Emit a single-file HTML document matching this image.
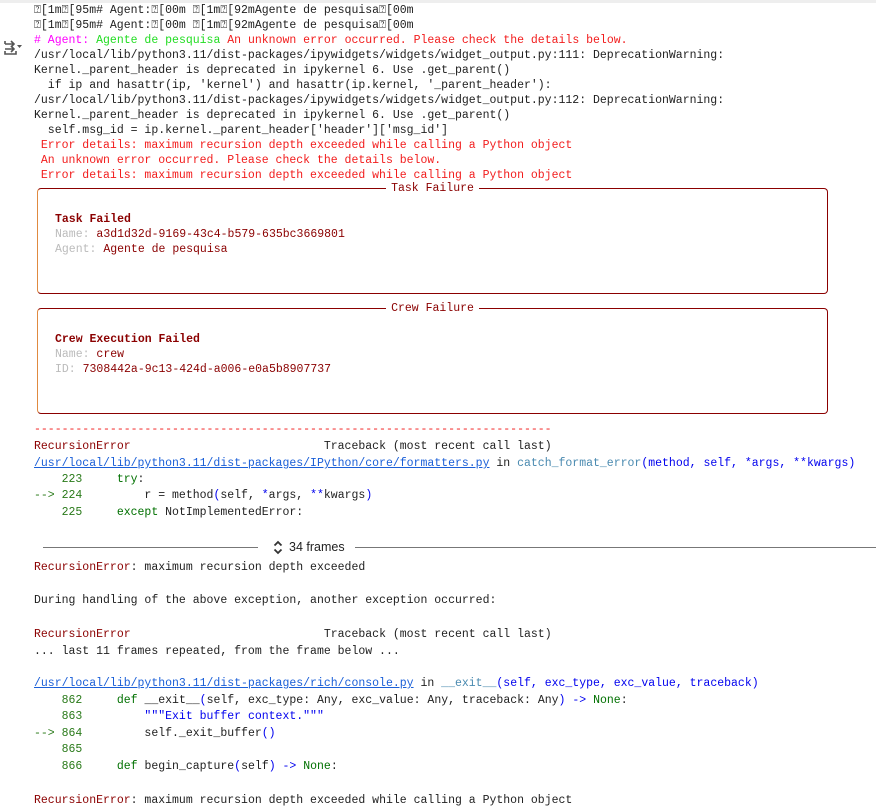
<!DOCTYPE html>
<html><head><meta charset="utf-8"><style>
body{margin:0;width:876px;height:805px;background:#fff;overflow:hidden;position:relative;font-family:"Liberation Mono",monospace;font-size:11.5px;color:#212121}
.l{position:absolute;left:34px;white-space:pre;line-height:15px;height:15px;margin-top:1px}
.r{color:#f21c1c}.m{color:#f0f}.g{color:#22dd22}.dr{color:#8b0000}.gr{color:#bbb}
.n{color:#2a7a1a}.k{color:#007000}.b{color:#0000ee}.lk{color:#1a5fd8;text-decoration:underline}.fn{color:#4a8ab0}
.box{position:absolute;left:37px;width:789px;border:1px solid #8b0000;border-left-color:#e08a40;border-radius:4px}
.lab{position:absolute;top:-8px;left:0;right:0;text-align:center;line-height:15px}
.lab span{background:#fff;color:#8b0000;padding:0 5px}
</style></head><body>
<div style="position:absolute;top:0;left:0;width:876px;height:3px;background:#eee"></div>
<svg style="position:absolute;left:3px;top:39px" width="20" height="17" viewBox="0 0 20 17"><path d="M2 2v3M2 12v3h11v-3M2 5h9M8 2l3 3-3 3M2 10h9M8 7l3 3-3 3" stroke="#555" stroke-width="1.6" fill="none"/><path d="M14 6h5l-2.5 3z" fill="#555"/></svg>
<div class="l" style="top:2px">⍰[1m⍰[95m# Agent:⍰[00m ⍰[1m⍰[92mAgente de pesquisa⍰[00m</div>
<div class="l" style="top:17px">⍰[1m⍰[95m# Agent:⍰[00m ⍰[1m⍰[92mAgente de pesquisa⍰[00m</div>
<div class="l" style="top:32px"><span class="m"># Agent: </span><span class="g">Agente de pesquisa</span><span class="r"> An unknown error occurred. Please check the details below.</span></div>
<div class="l" style="top:47px">/usr/local/lib/python3.11/dist-packages/ipywidgets/widgets/widget_output.py:111: DeprecationWarning:</div>
<div class="l" style="top:62px">Kernel._parent_header is deprecated in ipykernel 6. Use .get_parent()</div>
<div class="l" style="top:77px">  if ip and hasattr(ip, 'kernel') and hasattr(ip.kernel, '_parent_header'):</div>
<div class="l" style="top:92px">/usr/local/lib/python3.11/dist-packages/ipywidgets/widgets/widget_output.py:112: DeprecationWarning:</div>
<div class="l" style="top:107px">Kernel._parent_header is deprecated in ipykernel 6. Use .get_parent()</div>
<div class="l" style="top:122px">  self.msg_id = ip.kernel._parent_header['header']['msg_id']</div>
<div class="l r" style="top:137px"> Error details: maximum recursion depth exceeded while calling a Python object</div>
<div class="l r" style="top:152px"> An unknown error occurred. Please check the details below.</div>
<div class="l r" style="top:167px"> Error details: maximum recursion depth exceeded while calling a Python object</div>

<div class="box" style="top:188px;height:104px"><div class="lab"><span>Task Failure</span></div></div>
<div class="l dr" style="top:211px;left:55px;font-weight:bold">Task Failed</div>
<div class="l" style="top:226px;left:55px"><span class="gr">Name: </span><span class="dr">a3d1d32d-9169-43c4-b579-635bc3669801</span></div>
<div class="l" style="top:241px;left:55px"><span class="gr">Agent: </span><span class="dr">Agente de pesquisa</span></div>

<div class="box" style="top:308px;height:104px"><div class="lab"><span>Crew Failure</span></div></div>
<div class="l dr" style="top:331px;left:55px;font-weight:bold">Crew Execution Failed</div>
<div class="l" style="top:346px;left:55px"><span class="gr">Name: </span><span class="dr">crew</span></div>
<div class="l" style="top:361px;left:55px"><span class="gr">ID: </span><span class="dr">7308442a-9c13-424d-a006-e0a5b8907737</span></div>

<div class="l r" style="top:421px">---------------------------------------------------------------------------</div>
<div class="l" style="top:438px"><span class="dr">RecursionError</span>                            Traceback (most recent call last)</div>
<div class="l" style="top:455px"><span class="lk">/usr/local/lib/python3.11/dist-packages/IPython/core/formatters.py</span> in <span class="fn">catch_format_error</span><span class="b">(method, self, *args, **kwargs)</span></div>
<div class="l" style="top:471px"><span class="n">    223     </span><span class="k">try</span>:</div>
<div class="l" style="top:487px"><span class="n">--&gt; 224         </span>r = method<span class="b">(</span>self, <span class="b">*</span>args, <span class="b">**</span>kwargs<span class="b">)</span></div>
<div class="l" style="top:504px"><span class="n">    225     </span><span class="k">except</span> NotImplementedError:</div>

<div style="position:absolute;left:43px;top:547px;width:215px;height:1px;background:#777"></div>
<div style="position:absolute;left:355px;top:547px;width:521px;height:1px;background:#777"></div>
<svg style="position:absolute;left:273px;top:540px" width="10" height="15" viewBox="0 0 10 15"><path d="M1.5 5.5L5 2l3.5 3.5M1.5 9.5L5 13l3.5-3.5" stroke="#333" stroke-width="1.8" fill="none"/></svg>
<div style="position:absolute;left:289px;top:539px;font-family:'Liberation Sans',sans-serif;font-size:12.5px;color:#222;line-height:16px">34 frames</div>

<div class="l" style="top:559px"><span class="dr">RecursionError</span>: maximum recursion depth exceeded</div>
<div class="l" style="top:592px">During handling of the above exception, another exception occurred:</div>
<div class="l" style="top:626px"><span class="dr">RecursionError</span>                            Traceback (most recent call last)</div>
<div class="l" style="top:643px">... last 11 frames repeated, from the frame below ...</div>
<div class="l" style="top:675px"><span class="lk">/usr/local/lib/python3.11/dist-packages/rich/console.py</span> in <span class="fn">__exit__</span><span class="b">(self, exc_type, exc_value, traceback)</span></div>
<div class="l" style="top:692px"><span class="n">    862     </span><span class="k">def</span> __exit__<span class="b">(</span>self, exc_type: Any, exc_value: Any, traceback: Any<span class="b">)</span> <span class="b">-&gt;</span> <span class="k">None</span>:</div>
<div class="l" style="top:708px"><span class="n">    863         </span><span class="b">"""Exit buffer context."""</span></div>
<div class="l" style="top:725px"><span class="n">--&gt; 864         </span>self._exit_buffer<span class="b">()</span></div>
<div class="l" style="top:741px"><span class="n">    865</span></div>
<div class="l" style="top:758px"><span class="n">    866     </span><span class="k">def</span> begin_capture<span class="b">(</span>self<span class="b">)</span> <span class="b">-&gt;</span> <span class="k">None</span>:</div>
<div class="l" style="top:792px"><span class="dr">RecursionError</span>: maximum recursion depth exceeded while calling a Python object</div>
</body></html>
